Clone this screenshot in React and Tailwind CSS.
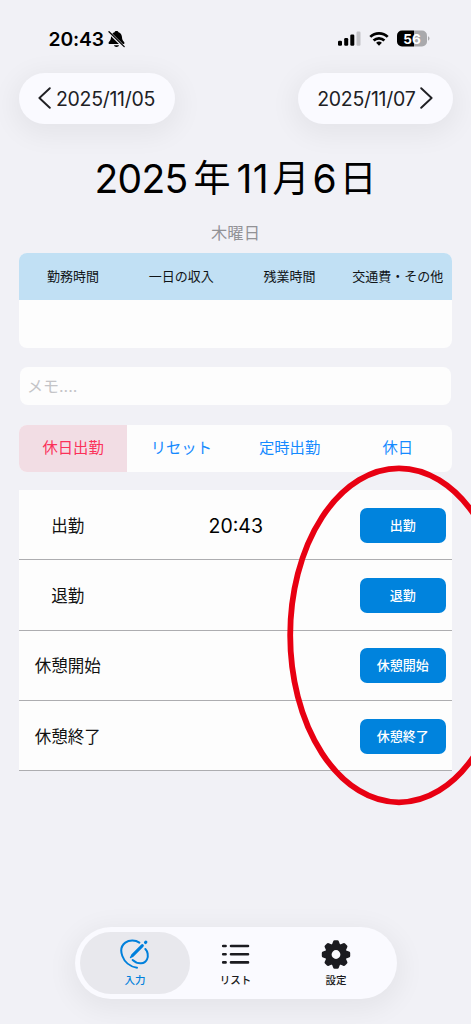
import React from 'react';

const HEADERS = ['勤務時間', '一日の収入', '残業時間', '交通費・その他'];
const ACTIONS = [
  { label: '休日出勤', style: 'bg-[#f2dde4] text-[#fb3159]' },
  { label: 'リセット', style: 'text-[#158aff]' },
  { label: '定時出勤', style: 'text-[#158aff]' },
  { label: '休日', style: 'text-[#158aff]' },
];
const ROWS = [
  { label: '出勤', time: '20:43' },
  { label: '退勤', time: '' },
  { label: '休憩開始', time: '' },
  { label: '休憩終了', time: '' },
];

function BellOff() {
  return (
    <svg width="17" height="18" viewBox="0 0 17 18">
      <path d="M8.500 1C7.400 1 6.800 1.600 6.500 2.200 4.100 3 3.100 5 3 7.200 2.900 9.700 2.200 10.700.9 12c-.7.8-.4 2.100.7 2.100h13.800c1.100 0 1.400-1.300.7-2.100-1.300-1.300-2-2.300-2.100-4.800-.1-2.200-1.100-4.200-3.500-5C10.200 1.600 9.600 1 8.500 1Z" />
      <path d="M6 15.200h5c-.3 1-1.200 1.700-2.500 1.700S6.300 16.200 6 15.200Z" />
      <path d="M0.500 1.800 16 17" stroke="#f1f1f6" strokeWidth="2.900" />
      <path d="M1 1.800 16.200 16.600" stroke="#000" strokeWidth="1.300" strokeLinecap="round" />
    </svg>
  );
}

function StatusBar() {
  return (
    <div className="flex h-[72.500px] shrink-0 items-start justify-between pt-[29.500px] pr-[41px] pl-[48.500px]">
      <div className="flex items-center gap-[4px]">
        <span className="w-[55.500px] text-[19.300px] leading-[18px] font-semibold tracking-[-0.100px] whitespace-nowrap">20:43</span>
        <BellOff />
      </div>
      <svg width="93" height="18" viewBox="337 29.500 93 18">
        <rect x="338" y="40.300" width="4" height="5" rx="1.200" />
        <rect x="344.200" y="37.500" width="4" height="7.800" rx="1.200" />
        <rect x="350.300" y="34" width="4" height="11.300" rx="1.200" />
        <rect x="356.500" y="31" width="4" height="14.300" rx="1.200" fill="#c3c3c7" />
        <g fill="none" stroke="#000" strokeWidth="2.700">
          <path d="M370.300 36.400a12.400 12.400 0 0 1 17.400 0" />
          <path d="M373.600 40a7.800 7.800 0 0 1 10.800 0" />
        </g>
        <path d="M379 45.200l-2.900-2.900a4.200 4.200 0 0 1 5.800 0Z" />
        <path d="M402 30h12v16h-12a5 5 0 0 1-5-5v-6a5 5 0 0 1 5-5Z" />
        <path d="M414 30h8a5 5 0 0 1 5 5v6a5 5 0 0 1-5 5h-8Z" fill="#a9a9ac" />
        <path d="M428 35.800q1.500.6 1.500 2.200t-1.500 2.200Z" fill="#a9a9ac" />
        <text x="412" y="43" textAnchor="middle" fontSize="13.500" fontWeight="700" fill="#fff" className="font-['Inter']">56</text>
      </svg>
    </div>
  );
}

function Chevron({ flip }) {
  return (
    <svg width="13" height="22" viewBox="0 0 13 22" fill="none" stroke="#202024" strokeWidth="1.900" strokeLinecap="round" strokeLinejoin="round">
      <path d={flip ? 'M1.200 1.200 11.600 11 1.200 20.800' : 'M11.800 1.200 1.400 11 11.800 20.800'} />
    </svg>
  );
}

const PILL = 'flex h-[51.500px] items-center rounded-full bg-[#fafaff] text-[19.500px] text-[#202024] shadow-[0_6px_26px_6px_rgba(0,0,0,0.050)]';

function InputIcon() {
  return (
    <svg width="30" height="30" viewBox="180 88 90 90" fill="none" stroke="#0080dc" strokeWidth="6" strokeLinecap="round">
      <path d="M238 99C227 91 208 90 196 99 184 108 181 123 187 139 193 156 209 171 231 174" />
      <path d="M256 118C263 125 266 139 261 149 255 163 234 166 218 151" />
      <path d="M217 138 247 108" strokeWidth="9" />
      <path d="M212 143 219 136" strokeWidth="5" />
      <path d="M256.500 98.500 257.500 97.500" strokeWidth="9.500" />
    </svg>
  );
}

function ListIcon() {
  return (
    <svg width="30" height="30" viewBox="220.500 939.500 30 30" stroke="#1b1b20" strokeWidth="2.600" strokeLinecap="round">
      {[946.5, 954.7, 962.9].map((y) => (
        <path key={y} d={`M222.700 ${y}h2.400M230.500 ${y}h17`} />
      ))}
    </svg>
  );
}

function GearIcon() {
  return (
    <svg width="30" height="30" viewBox="-15 -15.500 30 30" fill="#1b1b20">
      <circle r="7.600" fill="none" stroke="#1b1b20" strokeWidth="6.400" />
      {[0, 45, 90, 135, 180, 225, 270, 315].map((a) => (
        <path key={a} transform={`rotate(${a})`} d="M-4.200-9.500-2.900-13Q-2.500-14.200-1.400-14.200H1.400Q2.500-14.200 2.900-13L4.200-9.500Z" />
      ))}
    </svg>
  );
}

export default function App() {
  return (
    <div className="relative flex h-[1024px] w-[471px] flex-col overflow-hidden bg-[#f1f1f6] font-['Inter','Noto_Sans_CJK_JP',sans-serif] text-black">
      <StatusBar />

      <div className="flex justify-between pr-[18.500px] pl-[18.500px]">
        <button className={`${PILL} w-[156px] gap-[5px] pl-[19.500px]`}>
          <Chevron />
          <span className="pt-[2px] tracking-[-0.300px] whitespace-nowrap">2025/11/05</span>
        </button>
        <button className={`${PILL} w-[154.500px] justify-end gap-[4px] pr-[20px]`}>
          <span className="pt-[2px] tracking-[-0.250px] whitespace-nowrap">2025/11/07</span>
          <Chevron flip />
        </button>
      </div>

      <h1 className="mt-[30px] flex h-[50px] items-center pl-[94.500px] text-[39px] leading-[50px] whitespace-nowrap">
        <span className="w-[99px] tracking-[-0.700px]">2025</span>
        <span className="w-[43px] text-[37px]">年</span>
        <span className="w-[36px] tracking-[0.300px]">11</span>
        <span className="w-[40px] text-[37px]">月</span>
        <span className="w-[27px]">6</span>
        <span className="text-[37px]">日</span>
      </h1>
      <p className="mt-[17px] h-[24px] text-center text-[16.300px] leading-[24px] text-[#929296]">木曜日</p>

      <div className="mx-[19px] mt-[8px] h-[95px] shrink-0 overflow-hidden rounded-[8px] bg-[#fdfdfd]">
        <div className="grid h-[47px] grid-cols-4 items-center bg-[#c1e0f4] text-center text-[13px] text-[#101417]">
          {HEADERS.map((h) => (
            <span key={h} className="whitespace-nowrap">{h}</span>
          ))}
        </div>
      </div>

      <div className="mx-[20px] mt-[19px] flex h-[38px] shrink-0 items-center rounded-[8px] bg-[#fdfdfd] pl-[7px] text-[16px] text-[#c4c4c7]">
        メモ....
      </div>

      <div className="mx-[19px] mt-[19.500px] grid h-[47.500px] shrink-0 grid-cols-4 overflow-hidden rounded-[8px] bg-[#fdfdfd] text-[15.300px]">
        {ACTIONS.map((a) => (
          <button key={a.label} className={`flex items-center justify-center ${a.style}`}>{a.label}</button>
        ))}
      </div>

      <div className="mx-[19px] mt-[18px] flex shrink-0 flex-col">
        {ROWS.map((r) => (
          <div key={r.label} className="flex h-[70.300px] items-center border-b-[1px] border-[#adadb0] bg-[#fdfdfd] pt-[1px] pr-[6px]">
            <span className="w-[97.500px] pt-[2px] text-center text-[16.500px] text-[#111]">{r.label}</span>
            <span className="flex-1 pt-[2px] pr-[4px] text-center text-[19.500px]">{r.time}</span>
            <div className="flex w-[87px] justify-end">
              <button className="h-[35px] w-[86.500px] rounded-[7px] bg-[#0083dd] pt-[1px] text-[13px] font-medium text-white">{r.label}</button>
            </div>
          </div>
        ))}
      </div>

      <nav className="absolute top-[927px] left-[75px] flex h-[72px] w-[321.500px] items-center rounded-full bg-[#fafaff] px-[5px] text-[10.500px] font-medium text-[#1b1b20] shadow-[0_6px_26px_6px_rgba(0,0,0,0.050)]">
        <button className="flex h-[62px] w-[110px] flex-col items-center rounded-full bg-[#e8e8ed] pt-[7px] leading-[23px] text-[#0080dc]">
          <InputIcon />
          入力
        </button>
        <button className="flex h-[62px] w-[91px] flex-col items-center pt-[7px] leading-[23px]">
          <ListIcon />
          リスト
        </button>
        <button className="flex h-[62px] w-[110px] flex-col items-center pt-[7px] leading-[23px]">
          <GearIcon />
          設定
        </button>
      </nav>

      <svg className="pointer-events-none absolute top-[460px] left-[280px]" width="191" height="350" viewBox="280 460 191 350" fill="none">
        <ellipse cx="399" cy="635.300" rx="108.800" ry="167" stroke="#e80012" strokeWidth="5.800" />
      </svg>
    </div>
  );
}
